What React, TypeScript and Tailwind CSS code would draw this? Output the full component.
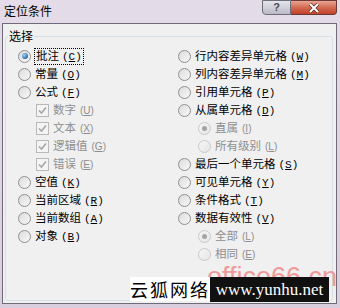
import React from "react";

type Item = {
  label: string;
  hotkey: string;
  kind?: "radio" | "check";
  sub?: boolean;
  checked?: boolean;
  disabled?: boolean;
  focus?: boolean;
};

const leftItems: Item[] = [
  { label: "批注", hotkey: "C", checked: true, focus: true },
  { label: "常量", hotkey: "O" },
  { label: "公式", hotkey: "F" },
  { label: "数字", hotkey: "U", kind: "check", sub: true, checked: true, disabled: true },
  { label: "文本", hotkey: "X", kind: "check", sub: true, checked: true, disabled: true },
  { label: "逻辑值", hotkey: "G", kind: "check", sub: true, checked: true, disabled: true },
  { label: "错误", hotkey: "E", kind: "check", sub: true, checked: true, disabled: true },
  { label: "空值", hotkey: "K" },
  { label: "当前区域", hotkey: "R" },
  { label: "当前数组", hotkey: "A" },
  { label: "对象", hotkey: "B" },
];

const rightItems: Item[] = [
  { label: "行内容差异单元格", hotkey: "W" },
  { label: "列内容差异单元格", hotkey: "M" },
  { label: "引用单元格", hotkey: "P" },
  { label: "从属单元格", hotkey: "D" },
  { label: "直属", hotkey: "I", sub: true, checked: true, disabled: true },
  { label: "所有级别", hotkey: "L", sub: true, disabled: true },
  { label: "最后一个单元格", hotkey: "S" },
  { label: "可见单元格", hotkey: "Y" },
  { label: "条件格式", hotkey: "T" },
  { label: "数据有效性", hotkey: "V" },
  { label: "全部", hotkey: "L", sub: true, checked: true, disabled: true },
  { label: "相同", hotkey: "E", sub: true, disabled: true },
];

const Radio = ({ checked, disabled }: { checked?: boolean; disabled?: boolean }) => (
  <span
    className={
      disabled
        ? "flex w-[13px] h-[13px] shrink-0 items-center justify-center rounded-full border border-[#c9c9c9] bg-linear-to-br from-[#f6f6f6] to-[#e6e6e6]"
        : "flex w-[13px] h-[13px] shrink-0 items-center justify-center rounded-full border border-[#8f8f8f] bg-linear-to-br from-[#dcdcdc] to-[#f8f8f8]"
    }
  >
    {checked && (
      <span
        className={
          disabled
            ? "w-[5px] h-[5px] rounded-full bg-[#a3a3a3]"
            : "w-[6px] h-[6px] rounded-full bg-[radial-gradient(circle_at_35%_35%,#9fd6f7,#2b6aa6_70%,#17446f)]"
        }
      />
    )}
  </span>
);

const Check = () => (
  <span className="flex w-[13px] h-[13px] shrink-0 items-center justify-center border border-[#b9b9b9] bg-[#f4f4f4]">
    <svg width="9" height="9" viewBox="0 0 9 9">
      <path d="M1 4.5 L3.5 7 L8 1.5" fill="none" stroke="#a6a6a6" strokeWidth="1.6" />
    </svg>
  </span>
);

const Row = ({ item }: { item: Item }) => {
  const text = (
    <span className="flex items-baseline">
      <span>{item.label}</span>
      {item.disabled ? (
        <span className="ml-[4px] text-[10px] font-['Liberation_Sans',sans-serif]">
          (<span className="underline">{item.hotkey}</span>)
        </span>
      ) : (
        <span className="ml-[3px] text-[11px] font-['Liberation_Mono',monospace]">
          (<span className="underline">{item.hotkey}</span>)
        </span>
      )}
    </span>
  );
  return (
    <div
      className={
        "flex h-[18px] items-center text-[11.5px] " +
        (item.sub ? (item.kind === "check" ? "pl-[18px]" : "pl-[20px]") : "") +
        (item.disabled ? " text-[#8e8e8e]" : " text-black")
      }
    >
      {item.kind === "check" ? <Check /> : <Radio checked={item.checked} disabled={item.disabled} />}
      <span className="ml-[3px]">
        {item.focus ? (
          <span className="block border border-dotted border-black px-[1px] leading-[13px]">{text}</span>
        ) : (
          <span className="block px-[1px]">{text}</span>
        )}
      </span>
    </div>
  );
};

export default function App() {
  return (
    <div className="relative flex h-[308px] w-[340px] flex-col overflow-hidden bg-linear-to-b from-[#e4dce8] to-[#d8cedd] font-['Noto_Sans_CJK_SC',sans-serif] text-[12px]">
      <div className="flex h-[23px] shrink-0 items-start justify-between pr-[3px]">
        <span className="pl-[4px] pt-[3px] text-[12px] leading-[16px] text-black">定位条件</span>
        <div className="flex">
          <div className="flex h-[15px] w-[29px] items-center justify-center rounded-bl-[4px] border border-[#6e6c78] bg-linear-to-b from-[#e6e6ec] to-[#b9bac6] text-[11px] font-bold leading-none text-[#4a4a58] font-['Liberation_Sans',sans-serif]">
            ?
          </div>
          <div className="flex h-[15px] w-[46px] items-center justify-center rounded-br-[4px] border border-l-0 border-[#6a3a36] bg-linear-to-b from-[#e8a593] via-[#d26a52] to-[#c2412a]">
            <svg width="12" height="10" viewBox="0 0 12 10">
              <path d="M2 1 L10 9 M10 1 L2 9" stroke="#5a2a24" strokeWidth="3.4" />
              <path d="M2 1 L10 9 M10 1 L2 9" stroke="#ffffff" strokeWidth="2" />
            </svg>
          </div>
        </div>
      </div>
      <div className="ml-[2px] mr-[3px] mb-[4px] flex flex-1 flex-col border border-[#6f6a78] bg-[#f0f0f0]">
        <div className="relative ml-[2px] mr-[3px] mt-[12px] mb-[2px] flex-1 rounded-[3px] border border-[#d5dfe5]">
          <span className="absolute left-[2px] top-[-8px] bg-[#f0f0f0] px-[1px] leading-[14px] text-black">选择</span>
          <div className="grid grid-cols-[160px_1fr] pl-[12px] pt-[10px]">
            <div className="flex flex-col">
              {leftItems.map((it, i) => (
                <Row key={i} item={it} />
              ))}
            </div>
            <div className="flex flex-col">
              {rightItems.map((it, i) => (
                <Row key={i} item={it} />
              ))}
            </div>
          </div>
        </div>
      </div>
      <span className="absolute left-[207px] top-[262px] text-[27px] leading-[30px] text-[#ee9a9a] font-['Liberation_Sans',sans-serif]">
        office66.cn
      </span>
      <div className="absolute left-[130px] top-[277px] flex h-[24px] w-[80px] items-center justify-center bg-white text-[18px] tracking-[2px] text-black">
        云狐网络
      </div>
      <div className="absolute left-[210px] top-[277px] flex h-[25px] w-[119px] items-center justify-center bg-[#111111] text-[17px] text-white font-['Liberation_Serif',serif]">
        www.yunhu.net
      </div>
    </div>
  );
}
